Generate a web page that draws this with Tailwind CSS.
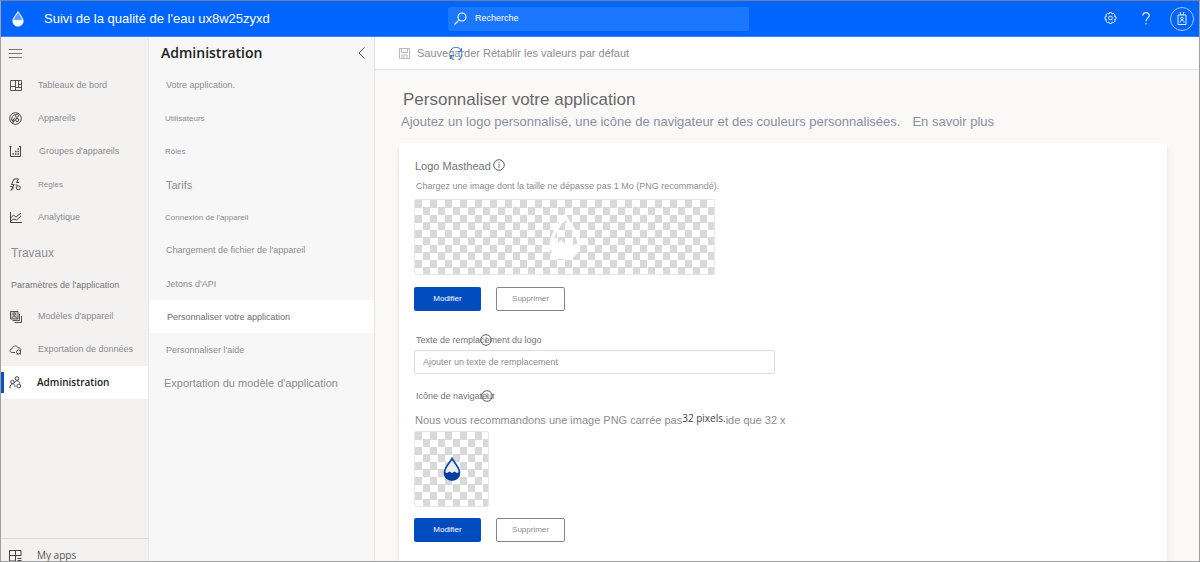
<!DOCTYPE html>
<html lang="fr">
<head>
<meta charset="utf-8">
<title>Personnaliser votre application</title>
<script src="https://cdn.jsdelivr.net/npm/@tailwindcss/browser@4"></script>
</head>
<body class="font-['Liberation_Sans',Arial,sans-serif] text-[9px] text-[#8c8c90]">
<svg class="hidden">
  <symbol id="info" viewBox="0 0 12 12"><circle cx="6" cy="6" r="5.3" fill="none" stroke="#55606c" stroke-width="1"/><path d="M6 5v4" stroke="#8a7f70" stroke-width="1"/><path d="M6 3v1" stroke="#5b87b5" stroke-width="1"/></symbol>
</svg>
<div class="flex h-screen flex-col overflow-hidden border border-[#a0a0a0] border-t-[#6f7f9f]">
  <header class="flex h-9 shrink-0 items-center border-b border-[#3a83f5] bg-[#0065ff] text-white">
    <svg class="ml-[11px] h-4 w-3" viewBox="0 0 12 16"><path d="M6 .8C4.600 3.600.9 6.700.9 10a5.100 5.100 0 0 0 10.200 0C11.100 6.700 7.400 3.600 6 .8z" fill="#5c9dff" stroke="#d5e5ff" stroke-width="1.200"/><path d="M1 9.500l2-1 1.500 1 1.500-1 1.500 1 1.500-1 2 1c.3 3-2 5.600-5 5.600S.7 12.500 1 9.500z" fill="#fff"/></svg>
    <h1 class="ml-5 w-[404px] shrink-0 text-[13px]">Suivi de la qualité de l'eau ux8w25zyxd</h1>
    <label class="flex h-6 w-[301px] items-center gap-2 rounded-xs bg-[#1c77ff] pl-[6px] shadow-xs">
      <svg class="h-[13px] w-[13px]" viewBox="0 0 13 13" fill="none" stroke="#fff" stroke-width="1.100"><circle cx="8" cy="5" r="4"/><path d="M5.200 7.800L.5 12.500"/></svg>
      <input type="search" aria-label="Recherche" placeholder="Recherche" class="min-w-0 flex-1 bg-transparent outline-none placeholder:text-white">
    </label>
    <div class="ml-auto flex items-center pr-[5px]">
      <button aria-label="Paramètres" class="mr-[25px]"><svg class="h-[13px] w-[13px]" viewBox="0 0 13 13" fill="none" stroke="#e4efff"><path d="M5.300.6h2.400l.4 1.500 1.400-.8 1.700 1.700-.8 1.400 1.600.4v2.400l-1.600.4.8 1.400-1.700 1.700-1.400-.8-.4 1.600H5.300l-.4-1.600-1.400.8L1.800 9l.8-1.400L1 7.200V4.800l1.600-.4L1.800 3l1.700-1.700 1.400.8z"/><circle cx="6.500" cy="6" r="1.900"/></svg></button>
      <button aria-label="Aide" class="mr-5"><svg class="h-[13px] w-2" viewBox="0 0 8 13" fill="none" stroke="#e4efff" stroke-width="1.200"><path d="M.8 3.500C.8 1.700 2.200.7 4 .7s3.200 1 3.200 2.700C7.200 5.800 4 6 4 9.300M4 11v1.500"/></svg></button>
      <button aria-label="Compte" class="grid h-6 w-6 place-items-center rounded-full border border-[#a9cbff]"><svg class="h-[13px] w-[10px]" viewBox="0 0 10 13" fill="none" stroke="#e4efff"><path d="M1 3h8v9.500H1zM3 0l1 3M7 0L6 3M3 10.500c0-3 4-3 4 0"/><circle cx="5" cy="6.500" r="1.300"/></svg></button>
    </div>
  </header>

  <div class="flex min-h-0 flex-1">
    <nav class="flex w-[148px] shrink-0 flex-col border-r border-[#e6e9e8] bg-[#f3f2f0]">
      <button aria-label="Menu" class="flex h-8 shrink-0 items-center pl-2"><svg class="h-[9px] w-[13px]" viewBox="0 0 13 9" stroke="#77777a"><path d="M0 .5h13M0 4.500h13M0 8.500h13"/></svg></button>
      <a href="#" class="flex h-[33px] items-center gap-4 pl-2"><svg class="h-[13px] w-[13px]" viewBox="0 0 13 13" fill="none" stroke="#555"><path d="M1.500 1.500h11v10h-11zM6.500 1.500v10M1.500 7.500h5M6.500 8.500h6M9.500 1.500v7M9.500 5.500h3"/></svg>Tableaux de bord</a>
      <a href="#" class="flex h-[33px] items-center gap-4 pl-2"><svg class="h-[13px] w-[13px]" viewBox="0 0 13 13" fill="none" stroke="#444"><circle cx="6.500" cy="6.500" r="5.800"/><path d="M2.500 8.500C2.500 5 4 3 6.500 2.500M4 11c0-3 .5-4.500 2.500-5"/><circle cx="8" cy="3.700" r="1.500"/><circle cx="8.200" cy="8" r="1.600"/><circle cx="4.500" cy="8.500" r="1"/></svg>Appareils</a>
      <a href="#" class="flex h-[33px] items-center gap-[17px] pl-2"><svg class="h-[13px] w-[13px]" viewBox="0 0 13 13" fill="none" stroke="#444"><path d="M1.500 1v10.500h10V1M.5 1.500h2M10 1.500h2"/><path d="M3.500 9H5M6 9h1.500M8.500 9H10M6 6.500h1.500M8.500 6.500H10M8.500 4H10" stroke-width="1.500"/></svg>Groupes d'appareils</a>
      <a href="#" class="flex h-[33px] items-center gap-4 pl-2 text-[8px]"><svg class="h-[13px] w-[13px]" viewBox="0 0 13 13" fill="none" stroke="#444"><path d="M5 1h4.500L7.500 4.500H10M5 1L2.500 6.500h2.700L2 12.500l3-3M1 8.500h3"/><circle cx="9.300" cy="9.800" r="2"/><path d="M6.500 7h2"/></svg>Règles</a>
      <a href="#" class="flex h-[33px] items-center gap-4 pl-2"><svg class="h-[13px] w-[13px]" viewBox="0 0 13 13" fill="none" stroke="#444"><path d="M1.500 1v10.500H13M1.500 7l3-3 2.500 2 5-4M2 9.500l3-1.500 2.500 1L12 5"/></svg>Analytique</a>
      <h2 class="flex h-[33px] items-center pt-1 pl-[10px] text-xs">Travaux</h2>
      <h2 class="flex h-[33px] items-center pt-1 pl-[10px] text-[#747478]">Paramètres de l'application</h2>
      <a href="#" class="flex h-[33px] items-center gap-4 pl-2"><svg class="h-[13px] w-[13px]" viewBox="0 0 13 13" fill="none" stroke="#555"><path d="M1.500 1.500h7.500v7.500h-7.500z" fill="#ccc"/><circle cx="5.200" cy="4" r="1.300"/><path d="M3 8.500c0-3 4.500-3 4.500 0M10.500 4v6.500H3.500M12.500 6v6.500H5.500"/></svg>Modèles d'appareil</a>
      <a href="#" class="flex h-[33px] items-center gap-4 pl-2"><svg class="h-[13px] w-[13px]" viewBox="0 0 13 13" fill="none" stroke="#555"><path d="M6 9.500H3C.3 9.500.3 6 3 5.800 3.300 2.300 8 2 9 4.800c1.700-.1 2.800.7 3 2.200"/><circle cx="9.500" cy="9" r="2"/><path d="M11.500 7v4.500M7.500 11h2"/></svg>Exportation de données</a>
      <a href="#" aria-current="page" class="flex h-[33px] items-center bg-white font-['Open_Sans',sans-serif] text-[10px] font-semibold text-[#222]"><span class="mr-[5px] h-[21px] w-[3px] bg-[#0a4fc4]"></span><svg class="mr-[15px] h-[13px] w-[13px]" viewBox="0 0 13 13" fill="none" stroke="#444"><circle cx="8" cy="2.500" r="1.800"/><circle cx="3.500" cy="6" r="1.700"/><path d="M1 12c0-5.500 5-5.500 5-1M5.500 7C6 4 10.500 4 10.800 7.500"/><circle cx="9.800" cy="10" r="1.900"/></svg>Administration</a>
      <div class="mt-auto h-[23px] shrink-0 overflow-hidden border-t border-[#dcdcdc]">
        <a href="#" class="flex items-center gap-[15px] pt-[9px] pl-2 font-['Open_Sans',sans-serif] text-[10px] leading-[14px] text-[#555]"><svg class="h-[13px] w-[13px]" viewBox="0 0 13 13" fill="none" stroke="#444"><path d="M12 7V1.500H.5V12H7M6.500 1.500V12M.5 6.500H12M8.500 9.500h4M8.500 11.500h4"/></svg>My apps</a>
      </div>
    </nav>

    <aside class="w-[226px] shrink-0 border-r border-[#e4e4e4] bg-[#f7f7f7]">
      <div class="flex h-8 items-center justify-between pr-[9px] pl-3">
        <h2 class="font-['Open_Sans',sans-serif] text-sm font-semibold text-[#222]">Administration</h2>
        <button aria-label="Réduire"><svg class="h-3 w-[7px]" viewBox="0 0 7 12" fill="none" stroke="#555"><path d="M6.500.5L1 6l5.500 5.500"/></svg></button>
      </div>
      <ul>
        <li><a href="#" class="flex h-[33px] items-center pl-[17px]">Votre application.</a></li>
        <li><a href="#" class="flex h-[33px] items-center pl-4 text-[8px]">Utilisateurs</a></li>
        <li><a href="#" class="flex h-[33px] items-center pl-4 text-[8px]">Rôles</a></li>
        <li><a href="#" class="flex h-[33px] items-center pt-[2px] pl-[17px] text-[11px]">Tarifs</a></li>
        <li><a href="#" class="flex h-[33px] items-center pl-4 text-[8px]">Connexion de l'appareil</a></li>
        <li><a href="#" class="flex h-[33px] items-center pl-[17px]">Chargement de fichier de l'appareil</a></li>
        <li><a href="#" class="flex h-[33px] items-center pt-[2px] pl-[17px]">Jetons d'API</a></li>
        <li><a href="#" aria-current="page" class="flex h-[33px] items-center bg-white pt-[2px] pl-[18px] text-[#6c6c70]">Personnaliser votre application</a></li>
        <li><a href="#" class="flex h-[33px] items-center pt-[2px] pl-[17px]">Personnaliser l'aide</a></li>
        <li><a href="#" class="flex h-[33px] items-center pt-[2px] pl-[15px] text-[11px]">Exportation du modèle d'application</a></li>
      </ul>
    </aside>

    <main class="flex min-w-0 flex-1 flex-col bg-[#faf9f8]">
      <div class="flex h-[33px] shrink-0 items-center border-b border-[#e3e3e3] bg-white pl-6 text-[11px]">
        <button class="flex items-center gap-[7px]"><svg class="h-[11px] w-[11px]" viewBox="0 0 11 11" fill="none" stroke="#b9b9bd"><path d="M.5.500h10v10H.5zM2.500.500v4h6v-4M3 10.500V7h5v3.500M5 8v2.500"/></svg>Sauvegarder</button>
        <button class="relative ml-[3px]">Rétablir les valeurs par défaut<svg class="absolute top-[2px] -left-[34px] h-[13px] w-[14px]" viewBox="0 0 14 13" fill="none" stroke="#4b7fd6" stroke-width="1.100"><path d="M1.500 5.500a5.300 5.300 0 0 1 10.500-1M12.500 1v3.500H9M12.500 7.500A5.300 5.300 0 0 1 2 9M1.500 12V8.500H5"/></svg></button>
      </div>
      <div class="px-[26px] pt-5 pb-[11px]">
        <h2 class="pl-[2px] text-[17px] leading-5 text-[#68686a]">Personnaliser votre application</h2>
        <p class="flex gap-3 pt-[2px] text-[13px] leading-5 text-[#8b8ea3]"><span>Ajoutez un logo personnalisé, une icône de navigateur et des couleurs personnalisées.</span><a href="#">En savoir plus</a></p>
      </div>
      <section class="mr-8 ml-6 flex-1 rounded-t-sm bg-white px-[15px] pt-[15px] shadow-md">
        <h3 class="flex h-4 items-center gap-[2px] pl-[1px] text-[11px] text-[#747478]">Logo Masthead<svg class="mb-[2px] h-3 w-3"><use href="#info"/></svg></h3>
        <p class="pt-[6px] pl-[2px] leading-3">Chargez une image dont la taille ne dépasse pas 1 Mo (PNG recommandé).</p>
        <div class="mt-[7px] grid h-[76px] w-[301px] place-items-center rounded-xs border border-[#e8e8e8] bg-[repeating-conic-gradient(#fff_0_25%,#d9d9d9_0_50%)] bg-[length:15px_15px]">
          <svg class="h-[46px] w-8" viewBox="0 0 32 46"><path d="M16 2C12 10 2 20 2 30a14 14 0 0 0 28 0C30 20 20 10 16 2z" fill="none" stroke="#fff" stroke-width="3"/><path d="M1 29l6 1 5-4 4 4 4-3 4 4 7-2c0 9-7 16-15 16S1 38 1 29z" fill="#fff"/></svg>
        </div>
        <div class="mt-3 flex gap-[15px] text-[8px]">
          <button class="h-6 w-[67px] rounded-xs bg-[#004cbf] text-white">Modifier</button>
          <button class="h-6 w-[69px] rounded-xs border border-[#86868a]">Supprimer</button>
        </div>
        <div class="relative mt-[23px] w-[361px] max-w-full">
          <label for="alt" class="block pl-[2px] leading-3 text-[#747478]">Texte de remplacement du logo</label>
          <svg class="absolute top-0 left-[66px] h-3 w-3"><use href="#info"/></svg>
          <input id="alt" type="text" placeholder="Ajouter un texte de remplacement" class="mt-1 block h-6 w-full rounded-xs border border-[#dedede] pl-2 outline-none placeholder:text-[#8c8c90]">
        </div>
        <h3 class="relative mt-4 pl-[2px] leading-3 text-[#747478]">Icône de navigateur<svg class="absolute top-0 left-[67px] h-3 w-3"><use href="#info"/></svg></h3>
        <p class="flex items-start pt-[10px] pl-[1px] text-[11px] leading-4">Nous vous recommandons une image PNG carrée pas<span class="font-['Open_Sans',sans-serif] text-[10px] leading-3 text-[#3c4250]">32 pixels.</span>ide que 32 x</p>
        <div class="mt-[3px] grid h-[76px] w-[75px] place-items-center rounded-xs border border-[#e8e8e8] bg-[repeating-conic-gradient(#fff_0_25%,#d9d9d9_0_50%)] bg-[length:15px_15px]">
          <svg class="h-6 w-[18px]" viewBox="0 0 18 24"><path d="M9 1.500C7 5.500 1.500 10.500 1.500 15.500a7.500 7.500 0 0 0 15 0C16.500 10.500 11 5.500 9 1.500z" fill="#eee" stroke="#0b49ac" stroke-width="1.700"/><path d="M1 15l3 1 2.500-1.500L9 16l2.500-1.500L14 16l3-1c.5 5-3.500 8.500-8 8.500S.5 20 1 15z" fill="#07409c"/></svg>
        </div>
        <div class="mt-[11px] flex gap-[15px] text-[8px]">
          <button class="h-6 w-[67px] rounded-xs bg-[#004cbf] text-white">Modifier</button>
          <button class="h-6 w-[69px] rounded-xs border border-[#86868a]">Supprimer</button>
        </div>
      </section>
    </main>
  </div>
</div>
</body>
</html>
